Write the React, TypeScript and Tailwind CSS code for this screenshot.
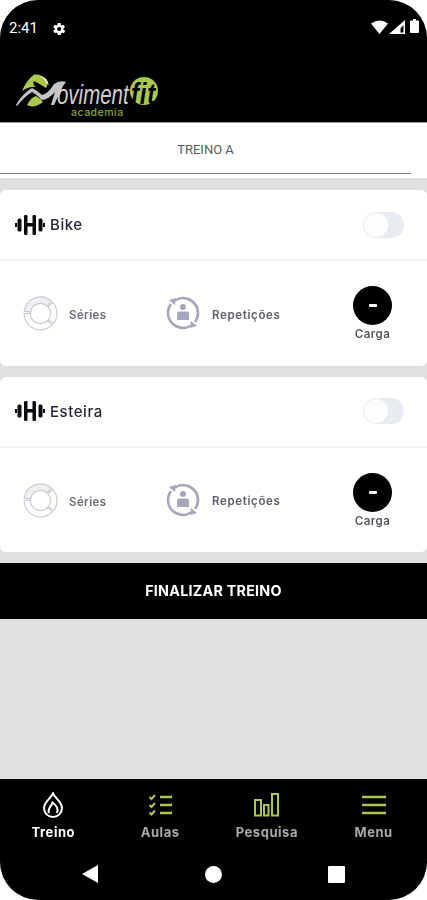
import React from "react";

const green = "#a9c84c";

function Dumbbell() {
  return (
    <svg width="30" height="20" viewBox="0 0 30 20" className="shrink-0">
      <g fill="#0b0b0f">
        <rect x="0" y="8" width="2" height="4" />
        <rect x="2.500" y="3.500" width="4" height="13" rx="1.500" />
        <rect x="9" y="0" width="3.500" height="20" rx="1.200" />
        <rect x="12" y="8" width="6" height="3.500" />
        <rect x="17.500" y="0" width="3.500" height="20" rx="1.200" />
        <rect x="23.500" y="3.500" width="4" height="13" rx="1.500" />
        <rect x="28" y="8" width="2" height="4" />
      </g>
    </svg>
  );
}

function seg(a1: number, a2: number) {
  const R = 16.5;
  const r = 10;
  const c = 17.5;
  const p = (rad: number, a: number) => {
    const t = (a * Math.PI) / 180;
    return `${(c + rad * Math.cos(t)).toFixed(2)} ${(c + rad * Math.sin(t)).toFixed(2)}`;
  };
  const large = a2 - a1 > 180 ? 1 : 0;
  return `M${p(R, a1)} A${R} ${R} 0 ${large} 1 ${p(R, a2)} L${p(r, a2)} A${r} ${r} 0 ${large} 0 ${p(r, a1)} Z`;
}

function SeriesIcon() {
  return (
    <svg width="35" height="35" viewBox="0 0 35 35" fill="none" stroke="#c6c9d0" strokeWidth="1.100">
      <path d={seg(188, 312)} fill="#eef0f2" />
      <path d={seg(318, 398)} />
      <path d={seg(404, 540)} />
    </svg>
  );
}

function RepsIcon() {
  return (
    <svg width="34" height="34" viewBox="0 0 34 34" fill="none">
      <g stroke="#a5a8bd" strokeWidth="2.600" fill="none">
        <path d="M9 4.500 A15 15 0 0 1 32 17 A15 15 0 0 1 29 26" />
        <path d="M25 29.500 A15 15 0 0 1 2 17 A15 15 0 0 1 5 8" />
      </g>
      <path d="M3 4 L10 2 L9 9 Z" fill="#a5a8bd" />
      <path d="M31 30 L24 32 L25 25 Z" fill="#a5a8bd" />
      <circle cx="17" cy="11" r="3" fill="#a5a8bd" />
      <path d="M11 24 V17.500 Q11 15.500 13 15.500 H21 Q23 15.500 23 17.500 V24 Z" fill="#a5a8bd" />
    </svg>
  );
}

function Card({ title }: { title: string }) {
  return (
    <section className="bg-white rounded-[6px] h-[175.5px] flex flex-col">
      <div className="h-[71px] flex items-center justify-between pl-[15px] pr-[23px] border-b-2 border-[#f3f3f4]">
        <div className="flex items-center gap-[5px]">
          <Dumbbell />
          <span className="mt-[2px] text-[15px] text-[#26263a] font-medium tracking-[0.55px]">{title}</span>
        </div>
        <div className="w-[41px] h-[26px] rounded-full bg-[#e8ebf0] p-[1px] flex items-center">
          <div className="w-[24px] h-[24px] rounded-full bg-[#fdfdfe]" />
        </div>
      </div>
      <div className="flex-1 flex items-start pl-[23px] pr-[35px] pt-[25px]">
        <div className="flex items-center gap-[11px] w-[143px] pt-[10px]">
          <SeriesIcon />
          <span className="mt-[5px] text-[11.500px] font-semibold text-[#6b6d78] tracking-[0.4px]">Séries</span>
        </div>
        <div className="flex items-center gap-[12px] pt-[10px]">
          <RepsIcon />
          <span className="mt-[5px] text-[11.500px] font-semibold text-[#5b5d6c] tracking-[0.65px]">Repetições</span>
        </div>
        <div className="ml-auto flex flex-col items-center">
          <div className="w-[39px] h-[39px] rounded-full bg-black flex items-center justify-center">
            <div className="w-[8px] h-[3px] bg-white rounded-[1px]" />
          </div>
          <span className="mt-[1px] text-[11.500px] font-semibold text-[#55565f] tracking-[0.5px]">Carga</span>
        </div>
      </div>
    </section>
  );
}

function NavItem({ label, color, icon }: { label: string; color: string; icon: React.ReactNode }) {
  return (
    <div className="flex flex-col items-center w-[107px]">
      <div className="h-[28px] flex items-center justify-center">{icon}</div>
      <span className={`mt-[5px] text-[13px] leading-[16px] font-bold tracking-[0.55px] ${color}`}>{label}</span>
    </div>
  );
}

export default function App() {
  return (
    <div className="w-[427px] h-[900px] bg-white overflow-hidden" style={{ fontFamily: "Inter, 'Liberation Sans', sans-serif" }}>
      <div className="w-full h-full rounded-[38px] overflow-hidden bg-[#e0e0e0] flex flex-col blur-[0.5px]">
        <header className="h-[122px] bg-black shrink-0 flex flex-col">
          <div className="h-[55px] pl-[9px] pr-[8px] pt-[19px] flex items-start justify-between">
            <div className="flex items-center gap-[14px] mt-[1px]">
              <span className="text-white text-[15px] leading-[17px]" style={{ fontFamily: "Roboto, sans-serif" }}>2:41</span>
              <svg width="14" height="14" viewBox="3 2 20 20" fill="#fff">
                <path d="M19.400 13a7.500 7.500 0 0 0 0-2l2.100-1.600-2-3.500-2.500 1a7.400 7.400 0 0 0-1.700-1L15.400 3.300h-4L11 5.900a7.400 7.400 0 0 0-1.700 1l-2.500-1-2 3.500L7 11a7.500 7.500 0 0 0 0 2l-2.200 1.600 2 3.500 2.500-1a7.400 7.400 0 0 0 1.700 1l.4 2.600h4l.4-2.600a7.400 7.400 0 0 0 1.700-1l2.500 1 2-3.500zM13.200 15a3 3 0 1 1 0-6 3 3 0 0 1 0 6z" />
              </svg>
            </div>
            <div className="flex items-start">
              <svg width="17" height="14" viewBox="0 0 17 14" fill="#fff" className="mt-[1px]"><path d="M0 3.500Q8.500-2.500 17 3.500L8.500 14z" /></svg>
              <svg width="16" height="14" viewBox="0 0 16 14" fill="#fff" className="ml-[1px] mt-[1px]"><path d="M16 0V14H0zM14.500 5 11.500 8.500V12.500H14.500z" fillRule="evenodd" /></svg>
              <svg width="9" height="14" viewBox="0 0 9 14" fill="#fff" className="ml-[5px]"><path d="M3 0h3v1.500h2a1 1 0 0 1 1 1V13a1 1 0 0 1-1 1H1a1 1 0 0 1-1-1V2.500a1 1 0 0 1 1-1h2z" /></svg>
            </div>
          </div>
          <div className="relative ml-[16px] mt-[17px] w-[144px] h-[46px]">
            <svg width="144" height="46" viewBox="0 0 144 46" className="absolute left-0 top-0">
              <path d="M6 19 Q10 9 18 2.500 Q26 2 31 8 Q33 11 30 16 Q24 12 18 9 Q16 12 20 15 Q14 14 6 19Z" fill={green} />
              <path d="M22 3 Q31 5 33 13 L30 11 Q28 6 22 3Z" fill="#e3ecb8" />
              <path d="M0 33 Q6 22 16 16 Q22 19 26 23 Q32 22 38 12 Q44 8 50 10 L47 14 L38 33 L35 33 L39 20 Q33 27 26 28 Q20 22 16 20 Q8 25 1 34Z" fill="#c4c4c4" />
              <path d="M11 33 Q15 25 20 24 Q24 26 27 30 Q18 37 11 33Z" fill={green} />
              <circle cx="128" cy="19" r="14" fill={green} />
            </svg>
            <span className="absolute left-[41px] top-[12px] origin-left scale-x-[0.73] text-[#cfcfcf] text-[28px] leading-[22px] italic whitespace-nowrap" style={{ fontFamily: "'Liberation Sans', sans-serif" }}>oviment</span>
            <span className="absolute left-[115px] top-[9px] origin-left scale-x-[0.8] text-black text-[30px] leading-[26px] italic font-bold tracking-[1px] whitespace-nowrap" style={{ fontFamily: "'Liberation Sans', sans-serif" }}>fit</span>
            <span className="absolute left-[55px] top-[35px] text-[10.500px] leading-[11px] font-medium tracking-[0.5px] text-[#86a32f]">academia</span>
          </div>
        </header>
        <div className="h-[56px] bg-white border-t border-[#9a9a9a] shrink-0">
          <div className="h-[51px] w-[411px] border-b border-[#7d7d7d] flex items-center justify-center pt-[3px]">
            <span className="text-[13px] text-[#5b5b5b]" style={{ fontFamily: "Roboto, sans-serif" }}>TREINO A</span>
          </div>
        </div>
        <main className="flex-1 flex flex-col pt-[12px] gap-[11px]">
          <Card title="Bike" />
          <Card title="Esteira" />
          <button className="h-[56px] bg-black text-white text-[14.300px] font-bold tracking-[0.25px]">FINALIZAR TREINO</button>
        </main>
        <footer className="h-[121px] bg-black shrink-0 flex flex-col">
          <div className="h-[76px] flex pt-[12px]">
            <NavItem label="Treino" color="text-white" icon={
              <svg width="22" height="26" viewBox="0 0 22 26" fill="none" stroke="#fff" strokeWidth="2">
                <path d="M11 1.500 C13 6 20 10 20 16 A9 9 0 0 1 2 16 C2 10 9 6 11 1.500Z" />
                <path d="M7 21 C5 16 9.500 15 10.500 10.500 C13.500 13 17 16 15 21" />
              </svg>} />
            <NavItem label="Aulas" color="text-[#a8a8a8]" icon={
              <svg width="23" height="22" viewBox="0 0 23 22" fill="none" stroke={green} strokeWidth="2.400">
                <path d="M0.500 3l2 2 3.500-4M0.500 11l2 2 3.500-4M0.500 18.500l2 2 3.500-4" strokeWidth="2" />
                <path d="M11 3H23M11 11H23M11 19H23" />
              </svg>} />
            <NavItem label="Pesquisa" color="text-[#a8a8a8]" icon={
              <svg width="25" height="24" viewBox="0 0 25 24" fill="none" stroke={green} strokeWidth="2">
                <rect x="1" y="7" width="6" height="15.500" />
                <rect x="10" y="12" width="4.500" height="10.500" />
                <rect x="18" y="1" width="6" height="21.500" />
              </svg>} />
            <NavItem label="Menu" color="text-[#a8a8a8]" icon={
              <svg width="24" height="20" viewBox="0 0 24 20" fill="none" stroke={green} strokeWidth="2.500">
                <path d="M0 2H24M0 10H24M0 18H24" />
              </svg>} />
          </div>
          <div className="flex-1 flex items-start justify-between pl-[81px] pr-[82px] pt-[9px]">
            <svg width="18" height="20" viewBox="0 0 18 20" fill="#fff"><path d="M17 1V19L1 10Z" /></svg>
            <div className="w-[17px] h-[17px] rounded-full bg-white mt-[2px]" />
            <div className="w-[17px] h-[17px] rounded-[1px] bg-white mt-[2px]" />
          </div>
        </footer>
      </div>
    </div>
  );
}
